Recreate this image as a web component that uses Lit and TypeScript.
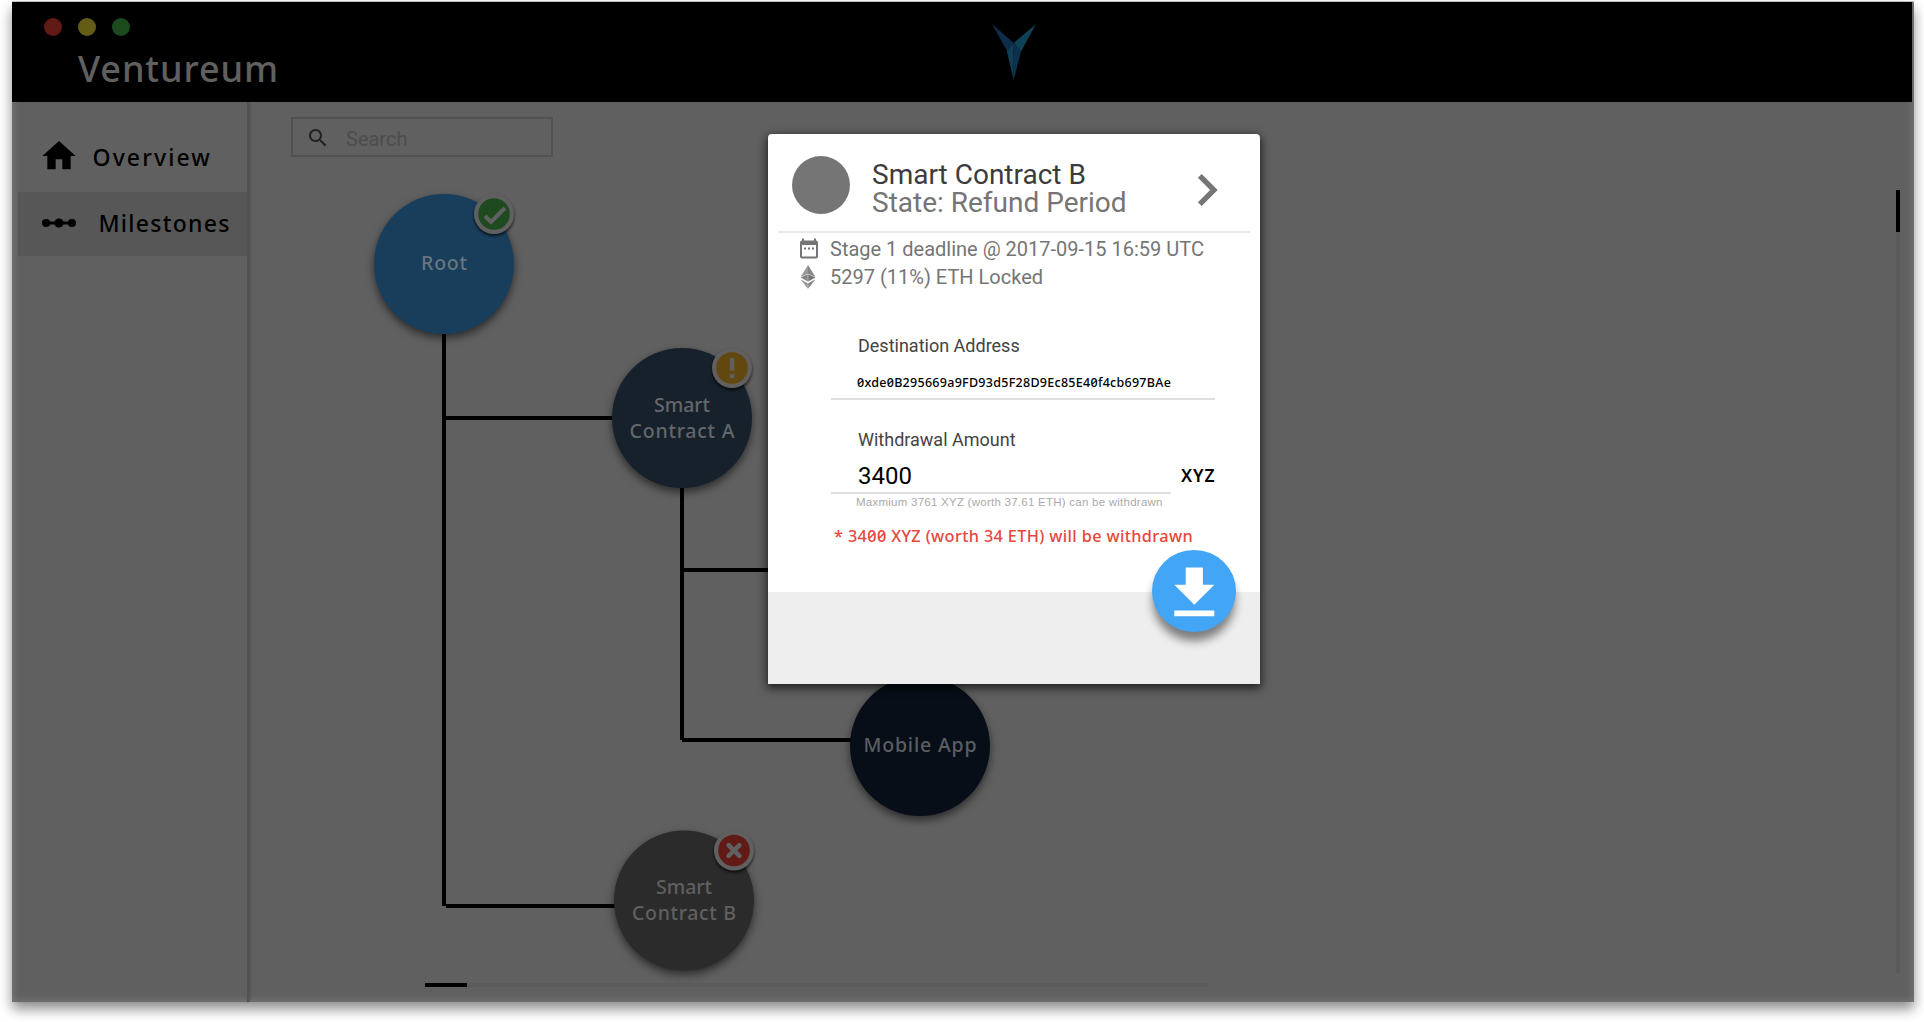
import { LitElement, html, svg, css } from "lit";
import { customElement } from "lit/decorators.js";

type Badge = "check" | "warn" | "error";

interface MilestoneNode {
  x: number;
  y: number;
  fill: string;
  ink: string;
  lines: { text: string; width: number; dy: number }[];
  badge?: Badge;
}

const NODES: MilestoneNode[] = [
  { x: 196, y: 162, fill: "#193e5c", ink: "#66757f", badge: "check", lines: [{ text: "Root", width: 46, dy: 6 }] },
  {
    x: 434, y: 316, fill: "#17212b", ink: "#62676b", badge: "warn",
    lines: [{ text: "Smart", width: 56, dy: -6 }, { text: "Contract A", width: 105, dy: 20 }],
  },
  { x: 672, y: 644, fill: "#070e18", ink: "#5b5e62", lines: [{ text: "Mobile App", width: 113, dy: 6 }] },
  {
    x: 436, y: 798.5, fill: "#2b2b2b", ink: "#606060", badge: "error",
    lines: [{ text: "Smart", width: 56, dy: -6.5 }, { text: "Contract B", width: 104, dy: 19.5 }],
  },
];

const BADGE_FILL: Record<Badge, string> = { check: "#1f4a20", warn: "#62480e", error: "#611a15" };

@customElement("milestone-map")
export class MilestoneMap extends LitElement {
  static styles = css`
    :host { display: block; }
    .map { display: block; }
    .edge { stroke: #000; stroke-width: 4; fill: none; }
    .disc { filter: drop-shadow(0 4px 4px rgba(0, 0, 0, 0.55)); }
    .ring { fill: #606060; filter: drop-shadow(0 2px 1.5px rgba(0, 0, 0, 0.7)); }
    .label {
      font-family: "Noto Sans", sans-serif;
      font-size: 19.5px;
      font-weight: 500;
      text-anchor: middle;
    }
  `;

  private glyph(kind: Badge) {
    if (kind === "check") return svg`<path d="M-9 2 L-3 8 L11 -6" fill="none" stroke="#606060" stroke-width="4" />`;
    if (kind === "warn") return svg`<path d="M-2.2 -10h4.6v12.5h-4.6zM-2.2 6h4.6v4.2h-4.6z" fill="#606060" />`;
    return svg`<path d="M-5.4 -5.4 L5.4 5.4 M5.4 -5.4 L-5.4 5.4" stroke="#606060" stroke-width="4.6" stroke-linecap="round" />`;
  }

  render() {
    return html`
      <svg class="map" width="1664" height="900" viewBox="0 0 1664 900">
        <path class="edge" d="M196 230V804M196 316H368M198 804H370M434 384V638M434 468H540M434 638H606" />
        ${NODES.map(
          (n) => svg`
          <g transform="translate(${n.x} ${n.y})">
            <circle class="disc" r="70" fill=${n.fill} />
            ${n.lines.map(
              (l) => svg`<text class="label" y=${l.dy} fill=${n.ink} textLength=${l.width}>${l.text}</text>`,
            )}
            ${n.badge
              ? svg`<g transform="translate(50 -50)">
                  <circle class="ring" r="20" />
                  <circle r="15.8" fill=${BADGE_FILL[n.badge]} />
                  ${this.glyph(n.badge)}
                </g>`
              : null}
          </g>`,
        )}
      </svg>
    `;
  }
}

@customElement("withdraw-dialog")
export class WithdrawDialog extends LitElement {
  static styles = css`
    :host {
      display: flex;
      flex-direction: column;
      width: 492px;
      height: 550px;
      border-radius: 4px 4px 0 0;
      background: #fff;
      box-shadow: 0 3px 10px 1px rgba(0, 0, 0, 0.7);
      font-family: Roboto, sans-serif;
    }
    .head {
      box-sizing: border-box;
      display: flex;
      height: 97px;
      padding: 22px 21px 0 24px;
    }
    .avatar { width: 58px; height: 58px; border-radius: 50%; background: #757575; }
    .titles { flex: 1; margin: 4.5px 0 0 22px; font-size: 28px; line-height: 28px; white-space: nowrap; }
    .name { color: #3c3c3c; }
    .state { color: #757575; }
    .chevron { width: 64px; height: 64px; margin: 2px 0 0; fill: #757575; }
    .rule { height: 2px; margin: 0 10px; background: #e9e9e9; }
    .facts { display: flex; flex-direction: column; padding: 2px 0 0 30px; }
    .fact { display: flex; align-items: center; height: 28px; color: #757575; font-size: 20px; white-space: nowrap; }
    .fact svg { flex: none; margin-right: 10px; }
    .form { display: flex; flex-direction: column; padding: 43px 45px 0 63px; }
    .caption { padding-left: 27px; font-size: 18px; line-height: 24px; color: #434343; }
    .address {
      margin-top: 15px;
      padding: 0 0 5px 26px;
      border-bottom: 2px solid #dfdfdf;
      font: 500 12.5px/20px "Noto Sans", sans-serif;
      font-feature-settings: "zero";
      letter-spacing: 0.28px;
      white-space: nowrap;
      color: #000;
    }
    .amount-caption { margin-top: 28px; }
    .amount-row { display: flex; }
    .amount {
      box-sizing: border-box;
      flex: none;
      width: 340px;
      height: 42px;
      padding: 6px 0 0 27px;
      border-bottom: 2px solid #dfdfdf;
      font-size: 24px;
      line-height: 36px;
      color: #000;
    }
    .unit { margin: 6px 0 0 10px; font: 600 17.5px/34px "Noto Sans", sans-serif; letter-spacing: 0.9px; color: #000; }
    .hint { padding-left: 25px; font: 11.5px/16px "Liberation Sans", sans-serif; letter-spacing: 0.25px; color: #aaa; white-space: nowrap; }
    .result {
      margin: 14px 0 0 3px;
      font: 500 16.3px/24px "Noto Sans", sans-serif;
      font-feature-settings: "zero";
      letter-spacing: 0.36px;
      color: #e9463b;
      white-space: nowrap;
    }
    .foot { display: flex; justify-content: flex-end; height: 92px; margin-top: auto; padding-right: 24px; background: #eee; }
    .fab {
      display: grid;
      place-items: center;
      width: 84px;
      height: 82px;
      margin-top: -42px;
      border-radius: 50%;
      background: #42a5f5;
      box-shadow: 0 10px 10px -1px rgba(0, 0, 0, 0.48);
    }
    .fab svg { display: block; margin-top: 5px; fill: #fff; }
  `;

  render() {
    return html`
      <div class="head">
        <div class="avatar"></div>
        <div class="titles">
          <div class="name">Smart Contract B</div>
          <div class="state">State: Refund Period</div>
        </div>
        <svg class="chevron" viewBox="0 0 24 24"><path d="M10 6 8.59 7.41 13.17 12l-4.58 4.59L10 18l6-6z" /></svg>
      </div>
      <div class="rule"></div>
      <div class="facts">
        <div class="fact">
          <svg width="22" height="24" viewBox="0 0 22 24">
            <path fill="#757575" fill-rule="evenodd" d="M4 1.5h2v2h10v-2h2v2a2 2 0 0 1 2 2v14a2 2 0 0 1-2 2h-14a2 2 0 0 1-2-2v-14a2 2 0 0 1 2-2zM4 8v11.5h14v-11.5z" />
            <path fill="#757575" d="M6 10.5h2v2h-2zM10 10.5h2v2h-2zM14 10.5h2v2h-2z" />
          </svg>
          <span>Stage 1 deadline @ 2017-09-15 16:59 UTC</span>
        </div>
        <div class="fact">
          <svg width="22" height="26" viewBox="0 0 22 26">
            <path fill="#9a9a9a" d="M10 1 2.6 13 10 9.8z" />
            <path fill="#858585" d="M10 1 17.4 13 10 9.8z" />
            <path fill="#858585" d="M2.6 13.4 9.8 10.3v7.1z" />
            <path fill="#767676" d="M17.4 13.4 10.2 10.3v7.1z" />
            <path fill="#9a9a9a" d="M2.6 15.2 9.8 19.2V24.8z" />
            <path fill="#858585" d="M17.4 15.2 10.2 19.2V24.8z" />
          </svg>
          <span>5297 (11%) ETH Locked</span>
        </div>
      </div>
      <div class="form">
        <div class="caption">Destination Address</div>
        <div class="address">0xde0B295669a9FD93d5F28D9Ec85E40f4cb697BAe</div>
        <div class="caption amount-caption">Withdrawal Amount</div>
        <div class="amount-row">
          <div class="amount">3400</div>
          <div class="unit">XYZ</div>
        </div>
        <div class="hint">Maxmium 3761 XYZ (worth 37.61 ETH) can be withdrawn</div>
        <div class="result">* 3400 XYZ (worth 34 ETH) will be withdrawn</div>
      </div>
      <div class="foot">
        <div class="fab">
          <svg width="68.6" height="68.6" viewBox="0 0 24 24"><path d="M19 9h-4V3H9v6H5l7 7 7-7zM5 18v2h14v-2H5z" /></svg>
        </div>
      </div>
    `;
  }
}

@customElement("app-root")
export class AppRoot extends LitElement {
  static styles = css`
    :host {
      display: block;
      box-sizing: border-box;
      height: 1022px;
      padding: 2px 10px 0 12px;
      overflow: hidden;
      background: #fff;
      font-family: "Noto Sans", sans-serif;
    }
    .window {
      position: relative;
      display: flex;
      flex-direction: column;
      height: 1000px;
      background: #606060;
      box-shadow: 0 7px 12px rgba(0, 0, 0, 0.45), 0 -1px 0 #c4c8ca, inset 0 0 9px rgba(255, 255, 255, 0.2);
    }
    .bar { display: flex; height: 100px; margin-right: 2px; background: #000; }
    .brand { width: 980px; }
    .dots { display: flex; gap: 16px; padding: 16px 0 0 32px; }
    .dot { width: 18px; height: 18px; border-radius: 50%; }
    .red { background: #611a15; }
    .yellow { background: #625c17; }
    .green { background: #1c4a1f; }
    .title { padding: 13px 0 0 66px; font-size: 36px; font-weight: 500; line-height: 40px; color: #606060; letter-spacing: 0.9px; }
    .logo { margin-top: 21px; }
    .body { display: flex; flex: 1; }
    .side {
      box-sizing: border-box;
      width: 237px;
      padding: 22px 0 0 6px;
      border-right: 2px solid #525252;
      box-shadow: 2px 0 3px -1px rgba(0, 0, 0, 0.2);
    }
    .item {
      box-sizing: border-box;
      display: flex;
      align-items: center;
      height: 66px;
      padding-left: 21px;
      font-size: 23px;
      font-weight: 500;
      color: #000;
      white-space: nowrap;
    }
    .item svg { flex: none; }
    .active { height: 64px; margin-top: 2px; padding-left: 24px; background: #575757; }
    .overview { margin-left: 13.5px; letter-spacing: 2.1px; }
    .milestones { margin: -2px 0 0 22.5px; letter-spacing: 1.25px; }
    .home { margin-top: -3px; }
    .link { margin-top: -3px; }
    .stage { position: relative; flex: 1; }
    .search {
      position: absolute;
      left: 42px;
      top: 15px;
      box-sizing: border-box;
      display: flex;
      align-items: center;
      width: 262px;
      height: 40px;
      padding: 2px 0 0 13px;
      border: 2px solid #515151;
      font: 20px/36px Roboto, sans-serif;
      color: #4d4d4d;
    }
    .search svg { margin-right: 16px; fill: #222; }
    .placeholder { padding-top: 1px; }
    .map { position: absolute; left: -1px; top: 0; }
    .htrack { position: absolute; left: 176px; top: 881px; width: 783px; height: 4px; background: #5a5a5a; }
    .hthumb { width: 42px; height: 4px; background: #000; }
    .vtrack { position: absolute; left: 1647px; top: 88px; width: 4px; height: 783px; background: #5a5a5a; }
    .vthumb { width: 4px; height: 42px; background: #000; }
    .dialog { position: absolute; left: 756px; top: 132px; }
  `;

  render() {
    return html`
      <div class="window">
        <div class="bar">
          <div class="brand">
            <div class="dots">
              <div class="dot red"></div>
              <div class="dot yellow"></div>
              <div class="dot green"></div>
            </div>
            <div class="title">Ventureum</div>
          </div>
          <svg class="logo" width="46" height="58" viewBox="0 0 46 58">
            <path fill="#0e2d4b" d="M0 1 21.7 20 14.7 27.5z" />
            <path fill="#104257" d="M44 1 21.7 20 29 28.5z" />
            <path fill="#103f55" d="M21.7 20 14.7 27.5 21.7 57z" />
            <path fill="#0d304e" d="M21.7 20 29 28.5 21.7 57z" />
          </svg>
        </div>
        <div class="body">
          <nav class="side">
            <div class="item">
              <svg class="home" width="40" height="40" viewBox="0 0 24 24"><path d="M10 20v-6h4v6h5v-8h3L12 3 2 12h3v8z" /></svg>
              <span class="overview">Overview</span>
            </div>
            <div class="item active">
              <svg class="link" width="34" height="12" viewBox="0 0 34 12">
                <path d="M4 4.5h26v3h-26z" />
                <circle cx="4.1" cy="6" r="4.1" /><circle cx="17" cy="6" r="4.6" /><circle cx="29.9" cy="6" r="4.1" />
              </svg>
              <span class="milestones">Milestones</span>
            </div>
          </nav>
          <main class="stage">
            <milestone-map class="map"></milestone-map>
            <div class="search">
              <svg width="24" height="24" viewBox="0 0 24 24">
                <path d="M15.5 14h-.79l-.28-.27C15.41 12.59 16 11.11 16 9.5 16 5.91 13.09 3 9.5 3S3 5.91 3 9.5 5.91 16 9.5 16c1.61 0 3.09-.59 4.23-1.57l.27.28v.79l5 4.99L20.49 19l-4.99-5zm-6 0C7.01 14 5 11.99 5 9.5S7.01 5 9.5 5 14 7.01 14 9.5 11.99 14 9.5 14z" />
              </svg>
              <span class="placeholder">Search</span>
            </div>
            <div class="htrack"><div class="hthumb"></div></div>
            <div class="vtrack"><div class="vthumb"></div></div>
          </main>
        </div>
        <withdraw-dialog class="dialog"></withdraw-dialog>
      </div>
    `;
  }
}
